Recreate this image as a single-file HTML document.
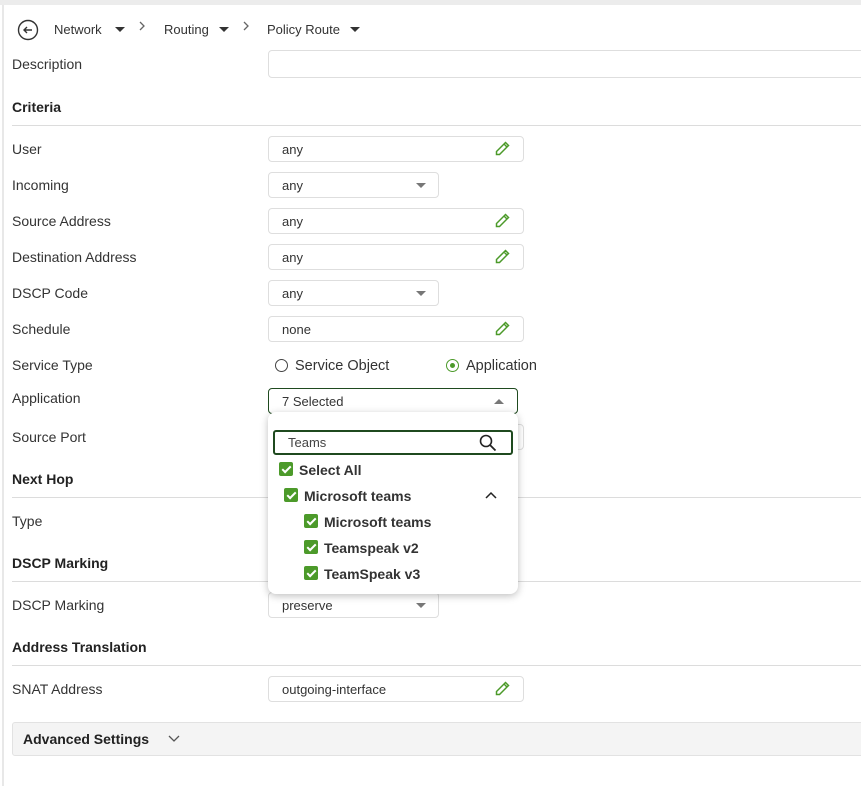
<!DOCTYPE html>
<html><head><meta charset="utf-8"><style>
*{box-sizing:border-box;margin:0;padding:0}
body{width:861px;height:786px;background:#fff;font-family:"Liberation Sans",sans-serif;font-size:14px;color:#333;position:relative;overflow:hidden}
.a{position:absolute}
.lbl{position:absolute;left:12px;font-size:14px;color:#333;transform:translateY(-50%)}
.h{position:absolute;left:12px;font-size:14px;font-weight:bold;color:#222;transform:translateY(-50%)}
.line{position:absolute;left:12px;right:0;height:1px;background:#dcdcdc}
.inp{position:absolute;left:268px;width:256px;height:26px;border:1px solid #dedede;border-radius:4px;padding-left:13px;line-height:26px;font-size:13px;color:#333}
.sel{width:171px}
.pen{position:absolute;right:13px;top:4px}
.tri{position:absolute;right:12px;top:10px;width:0;height:0;border-left:5px solid transparent;border-right:5px solid transparent;border-top:5px solid #777}
.cb{position:absolute;width:14px;height:14px;background:#4c9a2a;border-radius:2px}
.cb:after{content:"";position:absolute;left:4.5px;top:1.5px;width:3px;height:7px;border:solid #fff;border-width:0 2px 2px 0;transform:rotate(45deg)}
.it{position:absolute;font-weight:bold;font-size:14px;color:#333}
.chev{position:absolute;top:21px}
</style></head><body>
<div class="a" style="left:0;top:0;width:861px;height:5px;background:#ececec"></div>
<div class="a" style="left:2px;top:5px;width:2px;height:781px;background:#e8e8e8"></div>

<svg class="a" style="left:17px;top:19px" width="22" height="22" viewBox="0 0 22 22"><circle cx="11" cy="11" r="9.5" fill="none" stroke="#333" stroke-width="1.4"/><path d="M15 11H7M10 8l-3 3 3 3" fill="none" stroke="#333" stroke-width="1.4"/></svg>
<div class="a" style="left:54px;top:22px;font-size:13px">Network</div>
<div class="a" style="left:115px;top:27px;border-left:5px solid transparent;border-right:5px solid transparent;border-top:5px solid #333"></div>
<svg class="chev" style="left:138px" width="8" height="10" viewBox="0 0 8 10"><path d="M2 1l4 4-4 4" fill="none" stroke="#666" stroke-width="1.3"/></svg>
<div class="a" style="left:164px;top:22px;font-size:13px">Routing</div>
<div class="a" style="left:219px;top:27px;border-left:5px solid transparent;border-right:5px solid transparent;border-top:5px solid #333"></div>
<svg class="chev" style="left:242px" width="8" height="10" viewBox="0 0 8 10"><path d="M2 1l4 4-4 4" fill="none" stroke="#666" stroke-width="1.3"/></svg>
<div class="a" style="left:267px;top:22px;font-size:13px">Policy Route</div>
<div class="a" style="left:350px;top:27px;border-left:5px solid transparent;border-right:5px solid transparent;border-top:5px solid #333"></div>

<div class="lbl" style="top:64px">Description</div>
<div class="a" style="left:268px;top:50px;width:600px;height:28px;border:1px solid #dedede;border-radius:4px"></div>

<div class="h" style="top:107px">Criteria</div><div class="line" style="top:125px"></div>

<div class="lbl" style="top:149px">User</div>
<div class="inp" style="top:136px">any<svg class="pen" width="16" height="16" viewBox="0 0 16 16"><path d="M11.5 1.5l3 3-9 9H2.5v-3z M10 3l3 3" fill="none" stroke="#4c9a2a" stroke-width="1.5"/></svg></div>
<div class="lbl" style="top:185px">Incoming</div>
<div class="inp sel" style="top:172px">any<div class="tri"></div></div>
<div class="lbl" style="top:221px">Source Address</div>
<div class="inp" style="top:208px">any<svg class="pen" width="16" height="16" viewBox="0 0 16 16"><path d="M11.5 1.5l3 3-9 9H2.5v-3z M10 3l3 3" fill="none" stroke="#4c9a2a" stroke-width="1.5"/></svg></div>
<div class="lbl" style="top:257px">Destination Address</div>
<div class="inp" style="top:244px">any<svg class="pen" width="16" height="16" viewBox="0 0 16 16"><path d="M11.5 1.5l3 3-9 9H2.5v-3z M10 3l3 3" fill="none" stroke="#4c9a2a" stroke-width="1.5"/></svg></div>
<div class="lbl" style="top:293px">DSCP Code</div>
<div class="inp sel" style="top:280px">any<div class="tri"></div></div>
<div class="lbl" style="top:329px">Schedule</div>
<div class="inp" style="top:316px">none<svg class="pen" width="16" height="16" viewBox="0 0 16 16"><path d="M11.5 1.5l3 3-9 9H2.5v-3z M10 3l3 3" fill="none" stroke="#4c9a2a" stroke-width="1.5"/></svg></div>
<div class="lbl" style="top:365px">Service Type</div>
<div class="a" style="left:275px;top:359px;width:13px;height:13px;border:1.5px solid #444;border-radius:50%"></div>
<div class="a" style="left:295px;top:358px;font-size:14.5px">Service Object</div>
<div class="a" style="left:446px;top:359px;width:13px;height:13px;border:1.5px solid #4c9a2a;border-radius:50%"><div class="a" style="left:2.5px;top:2.5px;width:5px;height:5px;background:#4c9a2a;border-radius:50%"></div></div>
<div class="a" style="left:466px;top:358px;font-size:14.5px">Application</div>
<div class="lbl" style="top:398px">Application</div>
<div class="a" style="left:268px;top:388px;width:250px;height:26px;border:1px solid #1f4a1f;border-radius:4px;padding-left:13px;line-height:25px;font-size:13px">7 Selected<div class="a" style="right:13px;top:10px;border-left:5px solid transparent;border-right:5px solid transparent;border-bottom:5px solid #777"></div></div>
<div class="lbl" style="top:437px">Source Port</div>
<div class="a" style="left:268px;top:424px;width:256px;height:26px;border:1px solid #dedede;border-radius:4px"></div>

<div class="h" style="top:479px">Next Hop</div><div class="line" style="top:497px"></div>
<div class="lbl" style="top:521px">Type</div>
<div class="h" style="top:563px">DSCP Marking</div><div class="line" style="top:581px"></div>
<div class="lbl" style="top:605px">DSCP Marking</div>
<div class="inp sel" style="top:592px">preserve<div class="tri"></div></div>
<div class="h" style="top:647px">Address Translation</div><div class="line" style="top:665px"></div>
<div class="lbl" style="top:689px">SNAT Address</div>
<div class="inp" style="top:676px">outgoing-interface<svg class="pen" width="16" height="16" viewBox="0 0 16 16"><path d="M11.5 1.5l3 3-9 9H2.5v-3z M10 3l3 3" fill="none" stroke="#4c9a2a" stroke-width="1.5"/></svg></div>
<div class="a" style="left:12px;top:722px;width:860px;height:34px;background:#f4f4f4;border:1px solid #e2e2e2;border-radius:3px"></div>
<div class="a" style="left:23px;top:731px;font-weight:bold;font-size:14px;color:#222">Advanced Settings</div>
<svg class="a" style="left:168px;top:735px" width="12" height="8" viewBox="0 0 12 8"><path d="M1 1l5 5 5-5" fill="none" stroke="#555" stroke-width="1.3"/></svg>

<div class="a" style="left:268px;top:412px;width:250px;height:182px;background:#fff;border-radius:8px;box-shadow:0 2px 8px rgba(0,0,0,0.25)"></div>
<div class="a" style="left:273px;top:430px;width:240px;height:25px;border:2px solid #1f4a1f;border-radius:3px;padding-left:13px;line-height:22px;font-size:13px;color:#444">Teams</div>
<svg class="a" style="left:479px;top:434px" width="18" height="18" viewBox="0 0 18 18"><circle cx="7" cy="7" r="5.5" fill="none" stroke="#222" stroke-width="1.6"/><path d="M11 11l5.5 5.5" stroke="#222" stroke-width="1.8"/></svg>
<div class="cb" style="left:279px;top:462px"></div><div class="it" style="left:299px;top:462px">Select All</div>
<div class="cb" style="left:284px;top:488px"></div><div class="it" style="left:304px;top:488px">Microsoft teams</div>
<svg class="a" style="left:485px;top:491px" width="12" height="8" viewBox="0 0 12 8"><path d="M1 7l5-5 5 5" fill="none" stroke="#222" stroke-width="1.5"/></svg>
<div class="cb" style="left:304px;top:514px"></div><div class="it" style="left:324px;top:514px">Microsoft teams</div>
<div class="cb" style="left:304px;top:540px"></div><div class="it" style="left:324px;top:540px">Teamspeak v2</div>
<div class="cb" style="left:304px;top:566px"></div><div class="it" style="left:324px;top:566px">TeamSpeak v3</div>
</body></html>
